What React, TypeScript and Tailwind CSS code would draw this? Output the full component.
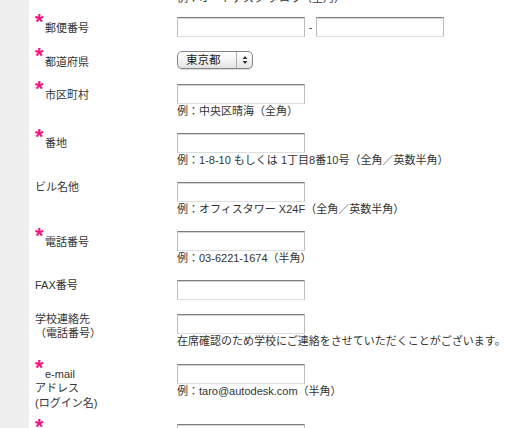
import type { ReactNode } from "react";

const font = { fontFamily: '"Liberation Sans", "Noto Sans CJK JP", sans-serif' };

function TextBox() {
  return (
    <div className="h-[20px] w-[128px] border border-[#bdbdbd] border-t-[#7d7d7d] border-b-[#dedede] bg-white shadow-[inset_0_1px_0_#d6d6d6]" />
  );
}

function PrefSelect() {
  return (
    <div className="flex h-[18px] w-[76px] items-center rounded-[5px] border border-[#858585] bg-gradient-to-b from-white via-[#f4f4f4] to-[#e2e2e2] shadow-[0_1px_1px_rgba(0,0,0,0.15)]">
      <span className="flex-1 pl-[8px] text-[11.5px] leading-[16px] text-[#222]">東京都</span>
      <span className="flex h-full w-[16px] items-center justify-center border-l border-[#b0b0b0]">
        <svg width="6" height="10" viewBox="0 0 6 10">
          <path d="M3 1 L5.5 4 H0.5 Z" fill="#333" />
          <path d="M3 9 L5.5 6 H0.5 Z" fill="#333" />
        </svg>
      </span>
    </div>
  );
}

function Star() {
  return (
    <div className="h-[8px] leading-[8px]">
      <span className="relative top-[5px] text-[22px] font-bold text-[#f5157c]">*</span>
    </div>
  );
}

interface RowProps {
  required?: boolean;
  lines: ReactNode[];
  field: ReactNode;
  note?: string;
  gap: string;
  labelShift: string;
}

function Row({ required, lines, field, note, gap, labelShift }: RowProps) {
  return (
    <div className={`flex items-start ${gap}`}>
      <div className={`w-[142px] shrink-0 ${labelShift}`}>
        {required && <Star />}
        {lines.map((line, i) => (
          <div key={i} className={`leading-[14.5px] ${required && i === 0 ? "pl-[10px]" : ""}`}>
            {line}
          </div>
        ))}
      </div>
      <div className="flex flex-col">
        {field}
        {note && <div className="whitespace-nowrap leading-[15px]">{note}</div>}
      </div>
    </div>
  );
}

export default function App() {
  return (
    <div className="flex h-[428px] w-[509px] overflow-hidden bg-white text-[11px] text-[#333]" style={font}>
      <div className="w-[29px] shrink-0 bg-[#eeeeee]" />
      <div className="flex-1 pl-[6px]">
        {/* tail of the row above, cut by the top edge */}
        <div className="-mt-[9px] h-[14px] pl-[142px] leading-[14px] whitespace-nowrap">例：オートデスク タロウ（全角）</div>

        <Row
          required
          gap="mt-[12px]"
          labelShift="-mt-[4px]"
          lines={["郵便番号"]}
          field={
            <div className="flex items-center">
              <TextBox />
              <span className="w-[11px] text-center leading-[14px]">-</span>
              <TextBox />
            </div>
          }
        />
        <Row required gap="mt-[14px]" labelShift="-mt-[4px]" lines={["都道府県"]} field={<PrefSelect />} />
        <Row
          required
          gap="mt-[14px]"
          labelShift="-mt-[4px]"
          lines={["市区町村"]}
          field={<TextBox />}
          note="例：中央区晴海（全角）"
        />
        <Row
          required
          gap="mt-[14px]"
          labelShift="-mt-[5px]"
          lines={["番地"]}
          field={<TextBox />}
          note="例：1-8-10 もしくは 1丁目8番10号（全角／英数半角）"
        />
        <Row
          gap="mt-[14px]"
          labelShift="-mt-[2px]"
          lines={["ビル名他"]}
          field={<TextBox />}
          note="例：オフィスタワー X24F（全角／英数半角）"
        />
        <Row
          required
          gap="mt-[14px]"
          labelShift="-mt-[4px]"
          lines={["電話番号"]}
          field={<TextBox />}
          note="例：03-6221-1674（半角）"
        />
        <Row gap="mt-[14px]" labelShift="-mt-[2px]" lines={["FAX番号"]} field={<TextBox />} />
        <Row
          gap="mt-[14px]"
          labelShift="-mt-[2px]"
          lines={["学校連絡先", "（電話番号）"]}
          field={<TextBox />}
          note="在席確認のため学校にご連絡をさせていただくことがございます。"
        />
        <Row
          required
          gap="mt-[15px]"
          labelShift="-mt-[5px]"
          lines={["e-mail", "アドレス", "(ログイン名)"]}
          field={<TextBox />}
          note="例：taro@autodesk.com（半角）"
        />
        <Row required gap="mt-[14px]" labelShift="-mt-[6px]" lines={[]} field={<TextBox />} />
      </div>
    </div>
  );
}
